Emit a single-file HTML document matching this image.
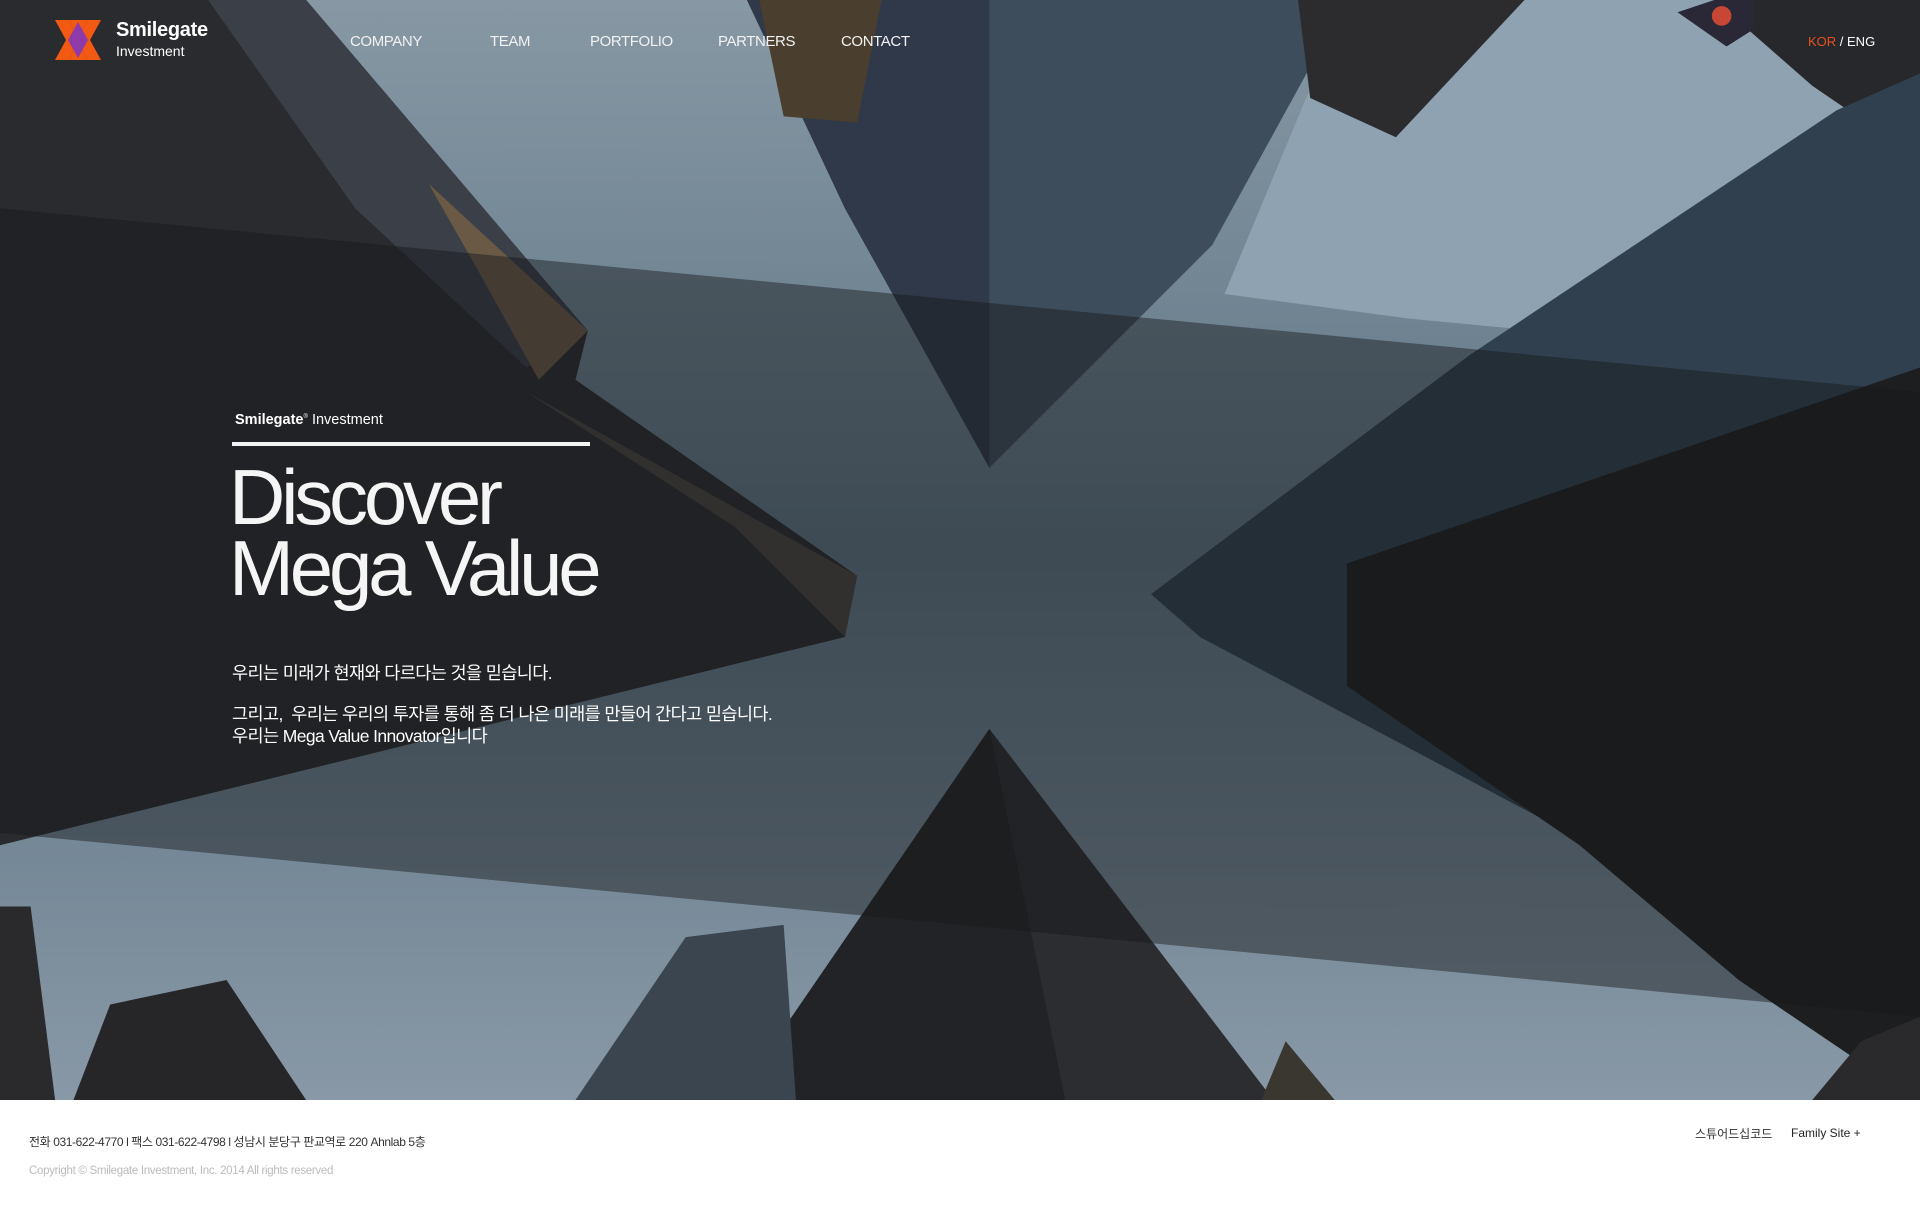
<!DOCTYPE html>
<html><head><meta charset="utf-8">
<style>
*{margin:0;padding:0;box-sizing:border-box}
body{width:1920px;height:1224px;overflow:hidden;background:#fff;font-family:"Liberation Sans","Noto Sans CJK KR",sans-serif;position:relative}
#hero{position:absolute;left:0;top:0;width:1920px;height:1100px;overflow:hidden;background:#3a4550}
#hero svg{position:absolute;left:0;top:0}
.abs{position:absolute;color:#fff;white-space:nowrap}
.nav{top:33px;font-size:15px;letter-spacing:-0.4px;color:#f2f2f2}
</style></head><body>
<div id="hero">
<svg width="1920" height="1100" viewBox="0 0 1568 898" preserveAspectRatio="none">
<defs>
<linearGradient id="sky" x1="0" y1="0" x2="0" y2="1">
<stop offset="0" stop-color="#8798a4"/><stop offset="0.5" stop-color="#5f7585"/><stop offset="1" stop-color="#8898a6"/>
</linearGradient>
</defs>
<rect width="1568" height="898" fill="url(#sky)"/>
<polygon points="1100,0 1420,0 1568,130 1568,300 1150,260 1000,240" fill="#8ea2b2"/>
<polygon points="0,0 250,0 480,270 470,310 700,470 690,520 0,690" fill="#2a2b2e"/>
<polygon points="170,0 250,0 480,270 430,300 290,170" fill="#3a3f48"/>
<polygon points="350,150 480,270 440,310 390,220" fill="#6a5a45"/>
<polygon points="430,320 700,470 690,520 600,430" fill="#4a4440"/>
<polygon points="610,0 1100,0 990,200 808,382 690,170" fill="#3e4d5c"/>
<polygon points="610,0 808,0 808,382 690,170" fill="#30394a"/>
<polygon points="620,0 720,0 700,100 640,95" fill="#4a3e2e"/>
<polygon points="1060,0 1245,0 1140,112 1070,80" fill="#2c2c2e"/>
<polygon points="1400,0 1568,0 1568,130 1480,70" fill="#26282b"/>
<polygon points="940,485 1200,290 1500,90 1568,60 1568,900 1420,800 1300,690 980,520" fill="#30404f"/>
<polygon points="1100,460 1568,300 1568,900 1420,800 1290,690 1100,560" fill="#1d1e20"/>
<polygon points="808,595 1040,898 600,898" fill="#2c2d30"/>
<polygon points="808,595 870,898 600,898" fill="#222326"/>
<polygon points="470,898 560,765 640,755 650,898" fill="#3a4550"/>
<polygon points="0,740 25,740 45,898 0,898" fill="#2a2a2c"/>
<polygon points="90,820 185,800 250,898 60,898" fill="#262628"/>
<polygon points="1030,898 1050,850 1090,898" fill="#3a3630"/>
<polygon points="1480,898 1520,850 1568,830 1568,898" fill="#2a2a2c"/>
<polygon points="0,170 1568,320 1568,830 0,680" fill="#16181b" fill-opacity="0.45"/>
<polygon points="1370,10 1400,0 1432,0 1432,24 1410,38" fill="#2a2836"/>
<circle cx="1406" cy="13" r="8" fill="#c84634"/>
</svg>

<svg class="abs" style="left:55px;top:20px" width="46" height="40" viewBox="0 0 46 40">
<polygon points="0,0 14,0 23,20 14,40 0,40 11,20" fill="#f25a14"/>
<polygon points="46,0 32,0 23,20 32,40 46,40 35,20" fill="#f25a14"/>
<polygon points="14,0 32,0 23,20" fill="#f25a14"/>
<polygon points="14,40 32,40 23,20" fill="#f25a14"/>
<polygon points="23,2 33,20 23,38 13,20" fill="#8e3aa8"/>
</svg>
<div class="abs" style="left:116px;top:19px;font-size:20px;font-weight:bold;letter-spacing:-0.3px">Smilegate</div>
<div class="abs" style="left:116px;top:43px;font-size:14px">Investment</div>

<div class="abs nav" style="left:350px">COMPANY</div>
<div class="abs nav" style="left:490px">TEAM</div>
<div class="abs nav" style="left:590px">PORTFOLIO</div>
<div class="abs nav" style="left:718px">PARTNERS</div>
<div class="abs nav" style="left:841px">CONTACT</div>
<div class="abs" style="left:1808px;top:34px;font-size:13px"><span style="color:#e8501e">KOR</span> / ENG</div>

<div class="abs" style="left:235px;top:412px;font-size:14.5px"><b>Smilegate</b><sup style="font-size:6px">®</sup> Investment</div>
<div class="abs" style="left:232px;top:442px;width:358px;height:4px;background:#f4f4f4"></div>
<div class="abs" style="left:229px;top:462px;font-size:78px;line-height:71px;letter-spacing:-4.2px;color:#f5f5f5">Discover<br>Mega Value</div>
<div class="abs" style="left:232px;top:660px;font-size:17.5px;letter-spacing:-0.6px">우리는 미래가 현재와 다르다는 것을 믿습니다.</div>
<div class="abs" style="left:232px;top:703px;font-size:17.5px;line-height:22px;letter-spacing:-0.6px">그리고,&nbsp; 우리는 우리의 투자를 통해 좀 더 나은 미래를 만들어 간다고 믿습니다.<br>우리는 Mega Value Innovator입니다</div>
</div>

<div class="abs" style="left:29px;top:1133px;font-size:12px;color:#333;letter-spacing:-0.4px">전화 031-622-4770 l 팩스 031-622-4798 l 성남시 분당구 판교역로 220 Ahnlab 5층</div>
<div class="abs" style="left:29px;top:1165px;font-size:11.5px;color:#bbb;letter-spacing:-0.3px">Copyright © Smilegate Investment, Inc. 2014 All rights reserved</div>
<div class="abs" style="left:1695px;top:1125px;font-size:12px;color:#333">스튜어드십코드</div>
<div class="abs" style="left:1791px;top:1126px;font-size:12px;color:#222">Family Site +</div>
</body></html>
